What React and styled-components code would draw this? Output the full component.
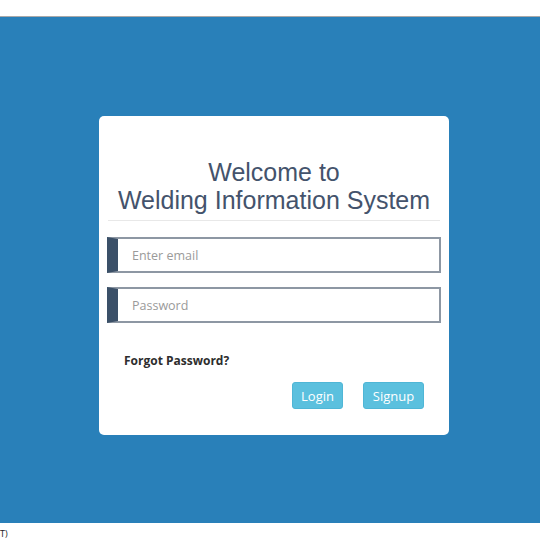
import React from "react";
import styled, { createGlobalStyle } from "styled-components";

const GlobalStyle = createGlobalStyle`
  html, body {
    margin: 0;
    padding: 0;
    background: #fff;
    font-family: "Open Sans", "Liberation Sans", sans-serif;
  }
`;

const TopBar = styled.div`
  height: 16px;
  background: #fff;
  border-bottom: 1px solid #a9a9a9;
`;

const Stage = styled.main`
  height: 506px;
  box-sizing: border-box;
  background: #2980b9;
  padding: 99px 0 0 99px;
`;

const Card = styled.div`
  width: 350px;
  height: 319px;
  box-sizing: border-box;
  background: #fff;
  border-radius: 5px;
  padding: 42px 8px 0 8px;
`;

const Title = styled.h2`
  margin: 0 1px;
  padding: 0 0 6px;
  font-family: "Liberation Sans", Arial, sans-serif;
  font-weight: 400;
  font-size: 25px;
  line-height: 28px;
  color: #44536c;
  text-align: center;
  border-bottom: 1px solid #e8e8e8;
`;

const Form = styled.form`
  display: flex;
  flex-direction: column;
  gap: 14px;
  margin-top: 16px;
`;

const Field = styled.input`
  height: 36px;
  box-sizing: border-box;
  width: 100%;
  border: 2px solid #8d97a3;
  border-left: 11px solid #3b5068;
  padding: 0 14px;
  font-family: "Open Sans", sans-serif;
  font-size: 12.5px;
  color: #333;
  outline: none;

  &::placeholder {
    color: #9a9a9a;
  }
`;

const Forgot = styled.a`
  display: block;
  margin: 29px 0 0 17px;
  font-size: 12px;
  font-weight: 700;
  color: #2d2d2d;
  text-decoration: none;
`;

const Actions = styled.div`
  display: flex;
  justify-content: flex-end;
  gap: 20px;
  margin: 13px 17px 0 0;
`;

const Button = styled.button`
  height: 27px;
  padding: 0 8px;
  background: #5bc0de;
  border: 1px solid #4fb6d6;
  border-radius: 3px;
  color: #fff;
  font-family: "Open Sans", sans-serif;
  font-size: 13px;
  min-width: ${(p) => p.$w}px;
`;

const Footer = styled.div`
  padding: 4px 0 0 0;
  font-size: 9px;
  color: #222;
`;

export default function App() {
  return (
    <>
      <GlobalStyle />
      <TopBar />
      <Stage>
        <Card>
          <Title>
            Welcome to
            <br />
            Welding Information System
          </Title>
          <Form onSubmit={(e) => e.preventDefault()}>
            <Field type="email" placeholder="Enter email" />
            <Field type="password" placeholder="Password" />
          </Form>
          <Forgot href="#">Forgot Password?</Forgot>
          <Actions>
            <Button $w={51}>Login</Button>
            <Button $w={61}>Signup</Button>
          </Actions>
        </Card>
      </Stage>
      <Footer>T)</Footer>
    </>
  );
}
